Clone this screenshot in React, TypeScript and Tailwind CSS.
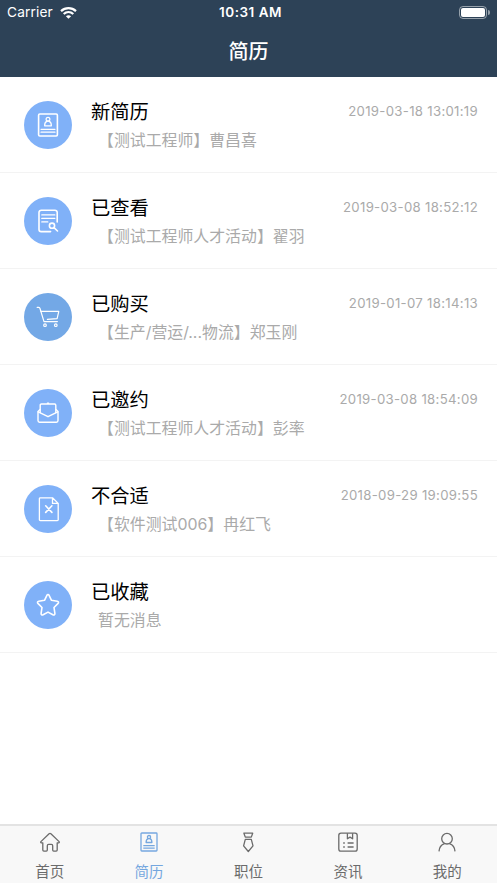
import type { ReactNode } from "react";
import clsx from "clsx";

type Message = {
  title: string;
  detail: string;
  time?: string;
  icon: ReactNode;
  muted?: boolean;
};

type Tab = {
  label: string;
  icon: ReactNode;
  active?: boolean;
};

const messages: Message[] = [
  {
    title: "新简历",
    detail: "【测试工程师】曹昌喜",
    time: "2019-03-18 13:01:19",
    icon: (
      <>
        <rect x="14.6" y="13" width="18.8" height="22" rx="1.2" />
        <circle cx="24" cy="18.3" r="1.9" strokeWidth="1.2" />
        <path d="M20.6 24.8c0-2.6 1.2-4.2 2.5-4.7h1.8c1.3.5 2.5 2.1 2.5 4.7z" strokeWidth="1.2" />
        <path d="M17 28.3h14M17 31.2h14" strokeWidth="1.2" />
      </>
    ),
  },
  {
    title: "已查看",
    detail: "【测试工程师人才活动】翟羽",
    time: "2019-03-08 18:52:12",
    icon: (
      <>
        <path d="M33.2 25v-9.6a2.2 2.2 0 0 0-2.2-2.2H17.2a2.2 2.2 0 0 0-2.2 2.2v17a2.2 2.2 0 0 0 2.2 2.2h9.4" />
        <path d="M17.8 17.9h13M17.8 21.4h13M17.8 24.9h6" strokeWidth="1.3" />
        <circle cx="28" cy="28.7" r="2.6" />
        <path d="m30 30.7 3.5 3.3" />
      </>
    ),
  },
  {
    title: "已购买",
    detail: "【生产/营运/...物流】郑玉刚",
    time: "2019-01-07 18:14:13",
    muted: true,
    icon: (
      <g strokeWidth="1.2">
        <path d="M13.2 14.4h1.6c.8 0 1 .4 1.2 1.1l4 13.1h13.4" />
        <path d="M17 18.4h17.8l-1.7 7.2-9.7.8" />
        <circle cx="21" cy="32.2" r="1.3" />
        <circle cx="31.8" cy="32.2" r="1.3" />
      </g>
    ),
  },
  {
    title: "已邀约",
    detail: "【测试工程师人才活动】彭率",
    time: "2019-03-08 18:54:09",
    icon: (
      <g strokeWidth="1.4">
        <path d="M16.2 23.5v-7.3a1.2 1.2 0 0 1 1.2-1.2h13.2a1.2 1.2 0 0 1 1.2 1.2v7.3" />
        <path d="m16 20.6-2 2v9a1.6 1.6 0 0 0 1.6 1.6h16.8a1.6 1.6 0 0 0 1.6-1.6v-9l-2-2" />
        <path d="m14.2 22.8 9.8 4.9 9.8-4.9M23.4 14.3h1.2" />
      </g>
    ),
  },
  {
    title: "不合适",
    detail: "【软件测试006】冉红飞",
    time: "2018-09-29 19:09:55",
    icon: (
      <>
        <path d="M28.5 12.8H16.3a.9.9 0 0 0-.9.9v21a.9.9 0 0 0 .9.9h17a.9.9 0 0 0 .9-.9V18.4zM28.5 12.8v5.6h5.7" strokeWidth="1.3" />
        <path d="m21.7 20.8 6.2 6.6m0-6.6-6.2 6.6" />
      </>
    ),
  },
  {
    title: "已收藏",
    detail: "暂无消息",
    icon: (
      <path d="M22.9 14.3c.5-1 1.7-1 2.2 0l2.4 5 5.8.9c1.2.2 1.6 1.4.8 2.2l-4.1 4.1.9 5.9c.2 1.3-.9 1.9-2 1.4L24 31.1l-4.9 2.7c-1.1.5-2.2-.1-2-1.4l.9-5.9-4.1-4.1c-.8-.8-.4-2 .8-2.2l5.8-.9z" />
    ),
  },
];

const tabs: Tab[] = [
  {
    label: "首页",
    icon: (
      <path d="M2.4 11.8c-.8 0-.9-.7-.5-1.2l8.2-7.9c.6-.5 1.2-.5 1.8 0l8.2 7.9c.4.5.3 1.2-.5 1.2h-1.4v7.3c0 .7-.4 1.1-1.1 1.1h-2.4c-.7 0-1-.4-1-1.1v-4.3c0-.9-.5-1.4-1.3-1.4h-2.8c-.8 0-1.3.5-1.3 1.4v4.3c0 .7-.3 1.1-1 1.1H4.9c-.7 0-1.1-.4-1.1-1.1v-7.3z" />
    ),
  },
  {
    label: "简历",
    active: true,
    icon: (
      <>
        <rect x="3" y="2" width="16" height="18" rx=".8" />
        <circle cx="11" cy="6.1" r="1.6" />
        <path d="M8.1 11.5c0-2.2 1-3.4 2.1-3.8h1.6c1.1.4 2.1 1.6 2.1 3.8z" />
        <path d="M5.3 14.6h11.4M5.3 17.1h11.4" />
      </>
    ),
  },
  {
    label: "职位",
    icon: <path d="M6.9 2.2h8.8l-1.4 3.9H8.3zM8.3 8.4h6l1.7 6.5-4.7 5.6-4.7-5.6z" />,
  },
  {
    label: "资讯",
    icon: (
      <>
        <rect x="1.8" y="2.2" width="18.4" height="18" rx="2.2" />
        <path d="M10.4 2.2v5.6L13 6.1l2.6 1.7V2.2" />
        <path d="M6.2 12h1.6M6.2 16h1.6" strokeWidth="1.6" />
        <path d="M10.6 12h6M10.6 16h6" />
      </>
    ),
  },
  {
    label: "我的",
    icon: (
      <>
        <circle cx="11" cy="7.7" r="5.3" />
        <path d="M3 20.4c.2-4 2.3-6.7 5.5-7.8M19 20.4c-.2-4-2.3-6.7-5.5-7.8" />
      </>
    ),
  },
];

const StatusBar = () => (
  <div className="grid h-[26px] grid-cols-3 items-center px-[7px] leading-none">
    <div className="flex items-center gap-[7px]">
      <span className="text-[13.7px] tracking-[0.15px]">Carrier</span>
      <svg className="h-3 w-[17px]" viewBox="0 0 17 12" fill="none" stroke="currentColor" strokeWidth="2.2">
        <path d="M1 4.1c4.3-4 10.7-4 15 0M3.7 7c2.8-2.5 6.8-2.5 9.6 0" />
        <path d="M8.5 11.8 5.9 9.2c1.5-1.3 3.7-1.3 5.2 0z" fill="currentColor" stroke="none" />
      </svg>
    </div>
    <span className="pl-1 text-center text-[13.5px] font-semibold tracking-[0.5px]">10:31 AM</span>
    <div className="flex items-center justify-end gap-px pb-px">
      <div className="h-[13px] w-7 rounded-[4px] border border-white/50 p-px">
        <div className="h-full rounded-[2px] bg-white" />
      </div>
      <div className="h-[5px] w-[2px] rounded-r-full bg-white/50" />
    </div>
  </div>
);

const MessageRow = ({ title, detail, time, icon, muted }: Message) => (
  <li className="flex h-24 border-b border-[#f3f3f3] pl-6 pr-[19px]">
    <div
      className={clsx(
        "mt-6 flex size-12 shrink-0 rounded-full text-white",
        muted ? "bg-[#73a8e6]" : "bg-[#80b1f8]"
      )}
    >
      <svg
        className="size-12"
        viewBox="0 0 48 48"
        fill="none"
        stroke="currentColor"
        strokeWidth="1.6"
        strokeLinecap="round"
        strokeLinejoin="round"
      >
        {icon}
      </svg>
    </div>
    <div className="ml-[19px] min-w-0 flex-1 pt-[21px]">
      <div className="flex items-start justify-between">
        <h2 className="text-[19.3px] leading-7 text-black">{title}</h2>
        {time && <time className="text-[13.2px] leading-[27px] tracking-[0.3px] text-[#aaa]">{time}</time>}
      </div>
      <p className="mt-px pl-[7px] text-[15.9px] leading-7 text-[#aaa]">{detail}</p>
    </div>
  </li>
);

const TabBar = () => (
  <nav className="grid h-[59px] grid-cols-5 border-t-2 border-[#e3e3e3] bg-[#f8f8f8]">
    {tabs.map(({ label, icon, active }) => (
      <button
        key={label}
        className={clsx("flex flex-col items-center pt-[5px]", active ? "text-[#75a7df]" : "text-[#6b6b6b]")}
      >
        <svg
          className="size-[22px]"
          viewBox="0 0 22 22"
          fill="none"
          stroke="currentColor"
          strokeWidth="1.3"
          strokeLinejoin="round"
        >
          {icon}
        </svg>
        <span className="mt-[9px] text-[14.5px] leading-5">{label}</span>
      </button>
    ))}
  </nav>
);

export default function App() {
  return (
    <div className="flex h-screen flex-col overflow-hidden bg-white font-['Inter','Noto_Sans_CJK_SC',sans-serif]">
      <header className="h-[77px] shrink-0 bg-[#2d4257] text-white">
        <StatusBar />
        <h1 className="pt-3 text-center text-xl leading-7 font-medium">简历</h1>
      </header>
      <ul className="flex-1">
        {messages.map((message) => (
          <MessageRow key={message.title} {...message} />
        ))}
      </ul>
      <TabBar />
    </div>
  );
}
